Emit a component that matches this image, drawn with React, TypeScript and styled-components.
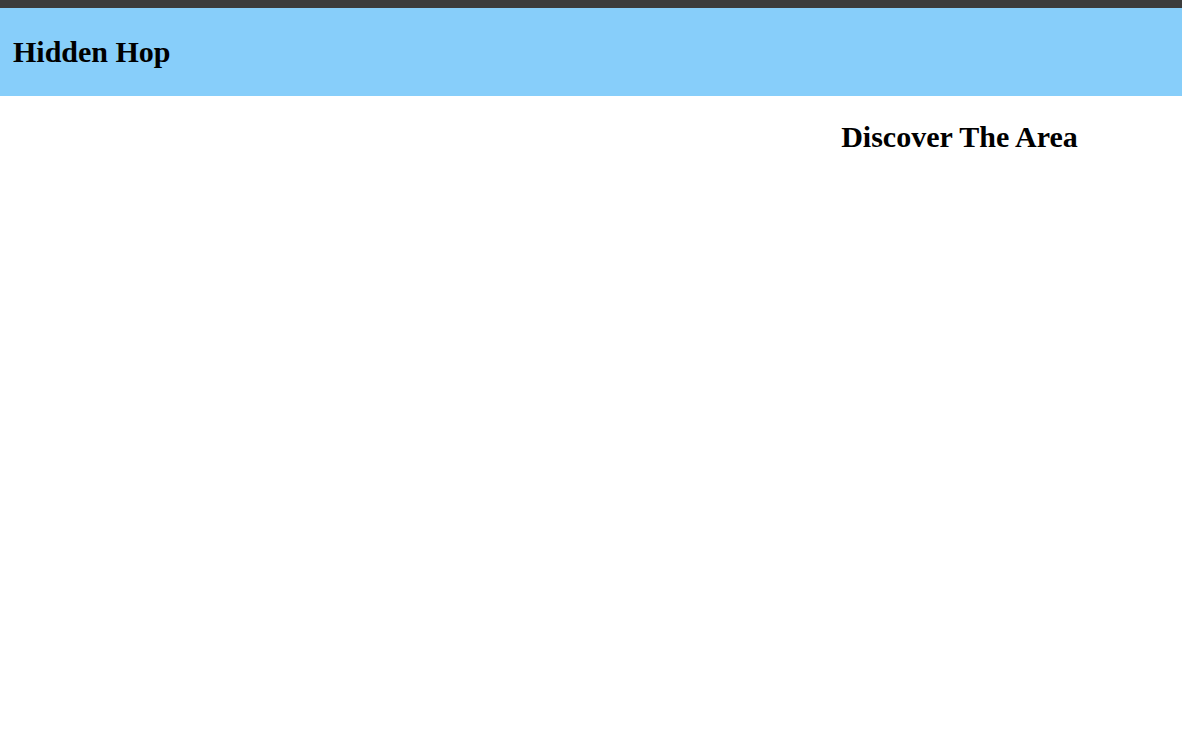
import React from 'react';
import styled, { createGlobalStyle } from 'styled-components';

const GlobalStyle = createGlobalStyle`
	html, body {
		margin: 0;
		padding: 0;
		background: #fff;
		font-family: "Liberation Serif", "Times New Roman", serif;
		color: #000;
	}
`;

const TopStrip = styled.div`
	height: 8px;
	background: #3c3c3c;
`;

const Header = styled.header`
	height: 88px;
	background: #87cefa;
	display: flex;
	align-items: center;
	padding-left: 13px;
	box-sizing: border-box;
`;

const Title = styled.h1`
	margin: 0;
	font-size: 30px;
	font-weight: bold;
`;

const Body = styled.main`
	display: flex;
	flex-direction: row;
	align-items: flex-start;
`;

const MapArea = styled.section`
	flex: 1;
`;

const Sidebar = styled.aside`
	width: 445px;
	padding-top: 24px;
	text-align: center;
`;

const SectionTitle = styled.h2`
	margin: 0;
	font-size: 30px;
	font-weight: bold;
	line-height: 34px;
`;

export default function App() {
	return (
		<>
			<GlobalStyle />
			<TopStrip />
			<Header>
				<Title>Hidden Hop</Title>
			</Header>
			<Body>
				<MapArea />
				<Sidebar>
					<SectionTitle>Discover The Area</SectionTitle>
				</Sidebar>
			</Body>
		</>
	);
}
